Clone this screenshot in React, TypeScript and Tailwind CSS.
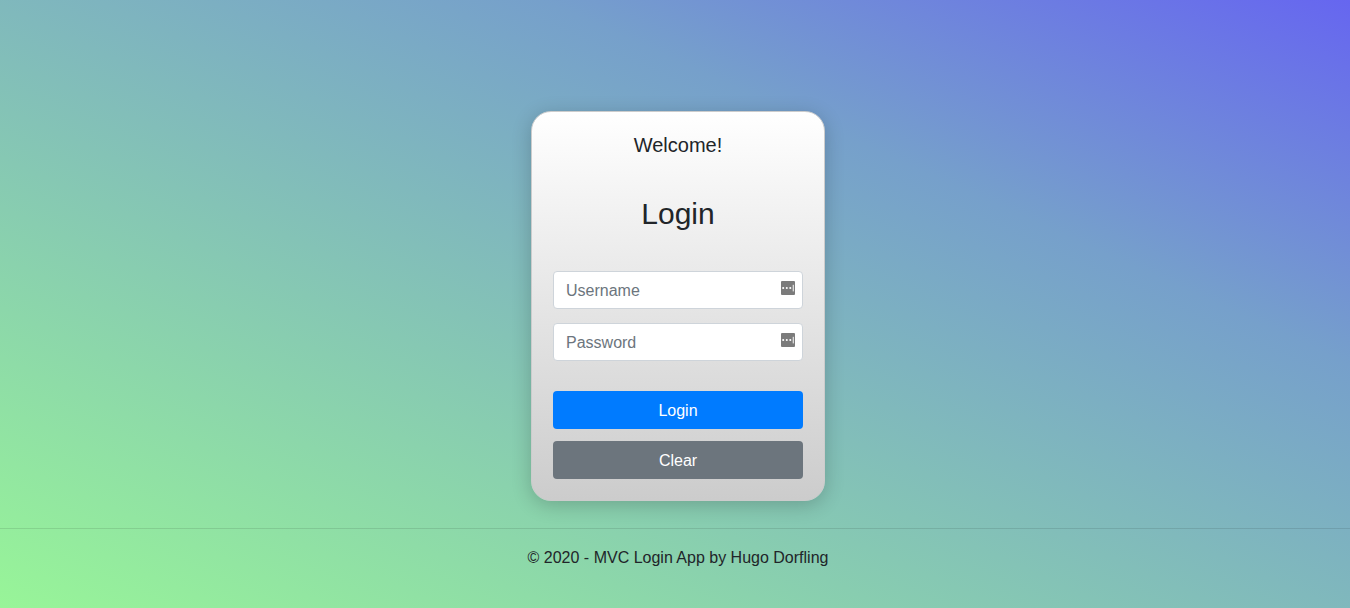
import { useState } from "react";
import type { FormEvent } from "react";

function ManagerIcon() {
  return (
    <svg
      viewBox="0 0 14 14"
      aria-hidden="true"
      className="pointer-events-none absolute right-2 top-[10px] h-[14px] w-[14px]"
    >
      <rect width="14" height="14" rx="1" fill="#7b7b7b" />
      <circle cx="2.2" cy="7" r="1.05" fill="#fff" />
      <circle cx="5.8" cy="7" r="1.05" fill="#fff" />
      <circle cx="9.3" cy="7" r="1.05" fill="#fff" />
      <rect x="11.7" y="3.8" width="1.2" height="6.6" fill="#e4e4e4" />
    </svg>
  );
}

type FieldProps = {
  label: string;
  type: string;
  value: string;
  onChange: (value: string) => void;
};

function Field({ label, type, value, onChange }: FieldProps) {
  return (
    <div className="relative">
      <input
        type={type}
        aria-label={label}
        placeholder={label}
        value={value}
        onChange={(e) => onChange(e.target.value)}
        className="block h-[38px] w-full rounded border border-[#ced4da] bg-white px-3 pt-[2px] text-base text-[#495057] placeholder:text-[#6c757d]"
      />
      <ManagerIcon />
    </div>
  );
}

export default function App() {
  const [username, setUsername] = useState("");
  const [password, setPassword] = useState("");

  const submit = (e: FormEvent) => e.preventDefault();
  const clear = () => {
    setUsername("");
    setPassword("");
  };

  return (
    <div className="flex min-h-screen flex-col bg-[linear-gradient(to_top_right,#98f598,#76a0cb_70%,#6666f0)] font-['Liberation_Sans',Arial,sans-serif] text-[#212529]">
      <main className="flex justify-center pl-[6px] pt-[111px]">
        <form
          onSubmit={submit}
          className="w-[294px] rounded-[20px] border border-[#cccccc] bg-linear-to-b from-white to-[#cccccc] px-[21px] pb-[21px] pt-[21px] shadow-[0_4px_20px_rgba(0,0,0,0.2)]"
        >
          <h2 className="text-center text-xl leading-6">Welcome!</h2>
          <h1 className="mt-[39px] text-center text-3xl leading-9">Login</h1>
          <div className="mt-[39px] flex flex-col gap-[14px]">
            <Field label="Username" type="text" value={username} onChange={setUsername} />
            <Field label="Password" type="password" value={password} onChange={setPassword} />
          </div>
          <div className="mt-[30px] flex flex-col gap-3">
            <button type="submit" className="h-[38px] rounded bg-[#007bff] pt-[2px] text-base text-white">
              Login
            </button>
            <button type="button" onClick={clear} className="h-[38px] rounded bg-[#6c757d] pt-[2px] text-base text-white">
              Clear
            </button>
          </div>
        </form>
      </main>
      <footer className="mt-[27px] border-t border-black/10 pl-[6px] pt-[17px] text-center text-base leading-6">
        © 2020 - MVC Login App by Hugo Dorfling
      </footer>
    </div>
  );
}
